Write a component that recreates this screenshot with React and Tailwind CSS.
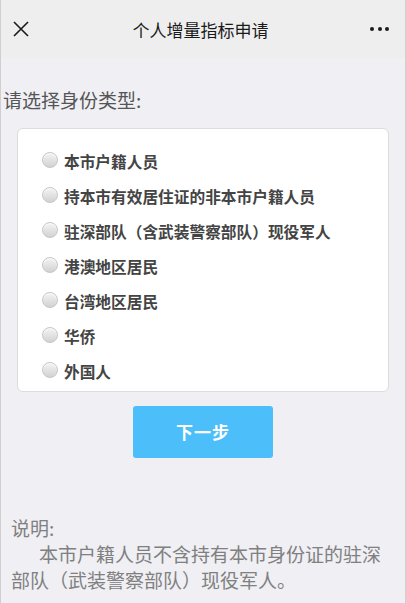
import React from "react";

const options = [
  "本市户籍人员",
  "持本市有效居住证的非本市户籍人员",
  "驻深部队（含武装警察部队）现役军人",
  "港澳地区居民",
  "台湾地区居民",
  "华侨",
  "外国人",
];

export default function App() {
  return (
    <div
      className="w-[406px] h-[603px] overflow-hidden bg-[#efeff4] border-l border-r border-[#cfcfd2] flex flex-col"
      style={{ fontFamily: '"Noto Sans CJK SC", "Noto Sans", sans-serif' }}
    >
      {/* Header */}
      <div className="h-[58px] shrink-0 bg-[#eeeeef] flex items-center px-[12px] relative">
        <svg width="16" height="16" viewBox="0 0 16 16" className="ml-[0px]">
          <path d="M1 1 L15 15 M15 1 L1 15" stroke="#1a1a1a" strokeWidth="1.6" fill="none" />
        </svg>
        <div className="flex-1 text-center text-[17px] text-[#1a1a1a] leading-none pl-[2px]">
          个人增量指标申请
        </div>
        <div className="flex items-center gap-[3.5px] mr-[4px]">
          <span className="w-[4px] h-[4px] rounded-full bg-[#1a1a1a]" />
          <span className="w-[4px] h-[4px] rounded-full bg-[#1a1a1a]" />
          <span className="w-[4px] h-[4px] rounded-full bg-[#1a1a1a]" />
        </div>
      </div>

      {/* Prompt */}
      <div className="mt-[29px] pl-[2px] text-[19px] leading-[26px] text-[#555]">
        请选择身份类型:
      </div>

      {/* Card */}
      <div className="mt-[15px] ml-[16px] w-[372px] bg-white border border-[#dcdcdc] rounded-[6px] pt-[15px] pb-[2px] pl-[24px]">
        {options.map((o) => (
          <div key={o} className="h-[35px] flex items-center">
            <span className="w-[16px] h-[16px] rounded-full border border-[#c6c6c6] bg-gradient-to-b from-[#f4f4f4] to-[#d2d2d2] shadow-[inset_0_1px_1px_rgba(255,255,255,0.8)] -mt-[3px]" />
            <span className="ml-[6px] text-[15.7px] font-bold text-[#444] leading-none">
              {o}
            </span>
          </div>
        ))}
      </div>

      {/* Button */}
      <div className="mt-[14px] flex justify-center">
        <button className="w-[140px] h-[52px] rounded-[3px] bg-[#4cbef9] text-white text-[17px] font-bold tracking-[1px]">
          下一步
        </button>
      </div>

      {/* Note */}
      <div className="mt-[57px] px-[10px] text-[19px] leading-[26px] text-[#808080]">
        <div>说明:</div>
        <div className="indent-[28px]">
          本市户籍人员不含持有本市身份证的驻深部队（武装警察部队）现役军人。
        </div>
      </div>
    </div>
  );
}
